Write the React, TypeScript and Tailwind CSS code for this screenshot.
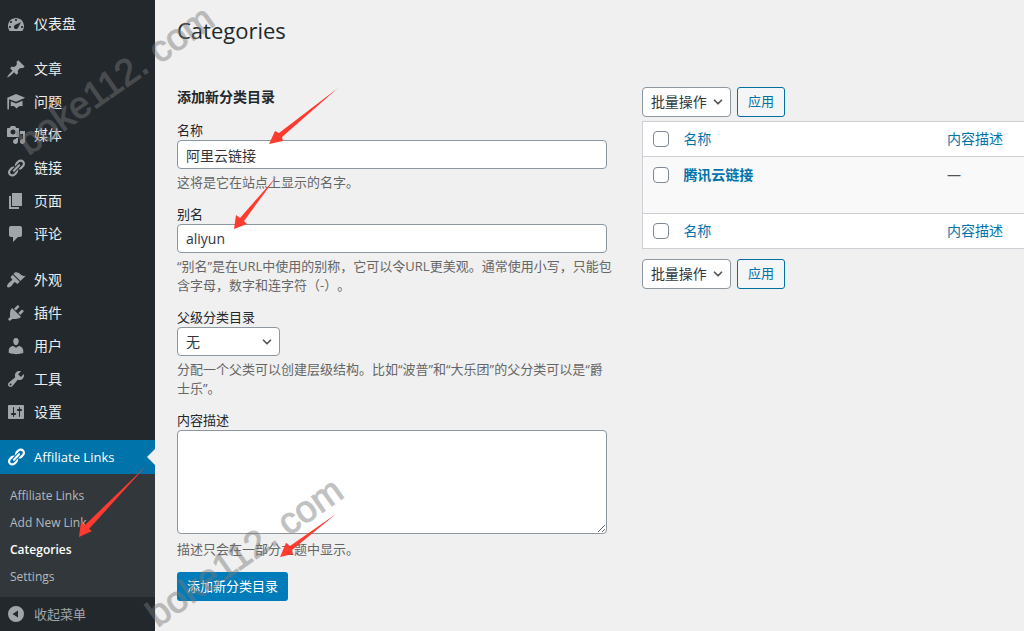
import { useState } from 'react'
import { ChevronDown } from 'lucide-react'
import clsx from 'clsx'

interface MenuItem {
  icon: keyof typeof ICONS
  label: string
}

const ICONS = {
  dashboard:
    'M3.76 17h12.48C17.34 15.63 18 13.9 18 12c0-4.41-3.58-8-8-8s-8 3.59-8 8c0 1.9.66 3.63 1.76 5zM9 6c0-.55.45-1 1-1s1 .45 1 1c0 .56-.45 1-1 1s-1-.44-1-1zM4 8c0-.55.45-1 1-1s1 .45 1 1-.45 1-1 1-1-.45-1-1zm4.52 3.4c.84-.83 6.51-3.5 6.51-3.5s-2.66 5.68-3.49 6.51c-.84.84-2.18.84-3.02 0-.83-.83-.83-2.18 0-3.01zM3 13c0-.55.45-1 1-1s1 .45 1 1c0 .56-.45 1-1 1s-1-.44-1-1zm12 0c0-.55.45-1 1-1s1 .45 1 1c0 .56-.45 1-1 1s-1-.44-1-1z',
  post: 'M10.44 3.02l1.82-1.82 6.36 6.35-1.83 1.82c-1.05-.68-2.48-.57-3.41.36l-.75.75c-.92.93-1.04 2.35-.35 3.41l-1.83 1.82-2.41-2.41-2.8 2.79c-.42.42-3.38 2.71-3.8 2.29s1.86-3.39 2.28-3.81l2.79-2.79L4.1 9.36l1.83-1.82c1.05.69 2.48.57 3.4-.36l.75-.75c.93-.92 1.05-2.35.36-3.41z',
  learn: 'M10 2l9.200 3.800-9.200 4L3.200 7.200 2.900 17.600H1.400L1.300 5.800zM4.800 9.300L10 11.500l6.500-2.700v5.600c-1.800-.7-3.400-.3-4.400.7L10.500 16.600 9.300 15.200c-1-1.200-2.600-1.600-4.500-1z',
  media:
    'M13 11V4c0-.55-.45-1-1-1h-1.67L9 1H5L3.67 3H2c-.55 0-1 .45-1 1v7c0 .55.45 1 1 1h10c.55 0 1-.45 1-1zM7 4.5c1.38 0 2.5 1.12 2.5 2.5S8.38 9.5 7 9.5 4.5 8.38 4.5 7 5.62 4.5 7 4.5zM14 6h5v10.5c0 1.38-1.12 2.5-2.5 2.5S14 17.88 14 16.5s1.12-2.5 2.5-2.5c.17 0 .34.02.5.05V9h-3V6zm-4 8.05V13h2v3.5c0 1.38-1.12 2.5-2.5 2.5S7 17.88 7 16.5 8.12 14 9.5 14c.17 0 .34.02.5.05z',
  link: 'M17.74 2.76c1.68 1.69 1.68 4.41 0 6.1l-1.53 1.52c-1.12 1.12-2.7 1.47-4.14 1.09l2.62-2.61.76-.77.76-.76c.84-.84.84-2.2 0-3.04-.84-.85-2.2-.85-3.04 0l-.77.76-3.38 3.38c-.37-1.44-.02-3.02 1.1-4.14l1.52-1.53c1.69-1.68 4.42-1.68 6.1 0zM8.59 13.43l5.34-5.34c.42-.42.42-1.1 0-1.52-.44-.43-1.13-.39-1.53 0l-5.33 5.34c-.42.42-.42 1.1 0 1.52.44.43 1.13.39 1.52 0zm-.76 2.29l4.14-4.15c.38 1.44.03 3.02-1.09 4.14l-1.52 1.53c-1.69 1.68-4.41 1.68-6.1 0-1.68-1.68-1.68-4.42 0-6.1l1.53-1.52c1.12-1.12 2.7-1.47 4.14-1.1l-4.14 4.15c-.85.84-.85 2.2 0 3.05.84.84 2.2.84 3.04 0z',
  page: 'M6 15V2h10v13H6zm-1 1h8v2H3V5h2v11z',
  comment: 'M5 2h9c1.1 0 2 .9 2 2v7c0 1.1-.9 2-2 2h-2l-5 5v-5H5c-1.1 0-2-.9-2-2V4c0-1.1.9-2 2-2z',
  appearance:
    'M14.48 11.06L7.41 3.99l1.5-1.5c.5-.56 2.3-.47 3.51.32 1.21.8 1.43 1.28 2.91 2.1 1.18.64 2.45 1.26 4.45.85zm-.71.71L6.7 4.7 4.93 6.47c-.39.39-.39 1.02 0 1.41l1.06 1.06c.39.39.39 1.03 0 1.42-.6.6-1.43 1.11-2.21 1.69-.35.26-.7.53-1.01.84C1.43 14.23.4 16.08 1.4 17.07c.99 1 2.84-.03 4.18-1.36.31-.31.58-.66.85-1.02.57-.78 1.08-1.61 1.69-2.21.39-.39 1.02-.39 1.41 0l1.06 1.06c.39.39 1.02.39 1.41 0z',
  plugin:
    'M13.11 4.36L9.87 7.6 8 5.73l3.24-3.24c.35-.34 1.05-.2 1.56.32.52.51.66 1.21.31 1.55zm-8 1.77l.91-1.12 9.01 9.01-1.19.84c-.71.71-2.63 1.16-3.82 1.16H6.14L4.9 17.26c-.59.59-1.54.59-2.12 0-.59-.58-.59-1.53 0-2.12l1.24-1.24v-3.88c0-1.13.4-3.19 1.09-3.89zm7.26 3.97l3.24-3.24c.34-.35 1.04-.21 1.55.31.52.51.66 1.21.31 1.55l-3.24 3.25z',
  user: 'M10 9.25c-2.27 0-2.73-3.44-2.73-3.44C7 4.02 7.82 2 9.97 2c2.16 0 2.98 2.02 2.71 3.81 0 0-.41 3.44-2.68 3.44zm0 2.57L12.72 10c2.39 0 4.52 2.33 4.52 4.53v2.49s-3.65 1.13-7.24 1.13c-3.65 0-7.24-1.13-7.24-1.13v-2.49c0-2.25 1.94-4.48 4.47-4.48z',
  tool: 'M16.68 9.77c-1.34 1.34-3.3 1.67-4.95.99l-5.41 6.52c-.99.99-2.59.99-3.58 0s-.99-2.59 0-3.57l6.52-5.42c-.68-1.65-.35-3.61.99-4.95 1.28-1.28 3.12-1.62 4.72-1.06l-2.89 2.89 2.82 2.82 2.86-2.87c.53 1.58.18 3.39-1.08 4.65zM3.81 16.21c.4.39 1.04.39 1.43 0 .4-.4.4-1.04 0-1.43-.39-.4-1.03-.4-1.43 0-.39.39-.39 1.03 0 1.43z',
  settings:
    'M18 16V4c0-.55-.45-1-1-1H3c-.55 0-1 .45-1 1v12c0 .55.45 1 1 1h14c.55 0 1-.45 1-1zM8 11h1c.55 0 1 .45 1 1s-.45 1-1 1H8v1.5c0 .28-.22.5-.5.5s-.5-.22-.5-.5V13H6c-.55 0-1-.45-1-1s.45-1 1-1h1V5.5c0-.28.22-.5.5-.5s.5.22.5.5V11zm5-2h-1c-.55 0-1-.45-1-1s.45-1 1-1h1V5.5c0-.28.22-.5.5-.5s.5.22.5.5V7h1c.55 0 1 .45 1 1s-.45 1-1 1h-1v5.5c0 .28-.22.5-.5.5s-.5-.22-.5-.5V9z',
  collapse: 'M10 2a8 8 0 1 0 0 16 8 8 0 0 0 0-16zm2 4.5v7L6.500 10z',
}

const MENU_GROUPS: MenuItem[][] = [
  [{ icon: 'dashboard', label: '仪表盘' }],
  [
    { icon: 'post', label: '文章' },
    { icon: 'learn', label: '问题' },
    { icon: 'media', label: '媒体' },
    { icon: 'link', label: '链接' },
    { icon: 'page', label: '页面' },
    { icon: 'comment', label: '评论' },
  ],
  [
    { icon: 'appearance', label: '外观' },
    { icon: 'plugin', label: '插件' },
    { icon: 'user', label: '用户' },
    { icon: 'tool', label: '工具' },
    { icon: 'settings', label: '设置' },
  ],
]

const SUBMENU = ['Affiliate Links', 'Add New Link', 'Categories', 'Settings']

const ARROWS = [
  '269,144 275,131 279,133 338,88 282,137 283,141',
  '234,229 236,215 240,218 277,176 244,221 247,224',
  '79,537 81,522 85,525 146,466 89,529 92,531',
  '280,557 286,543 290,546 336,514 292,550 293,554',
]

const INPUT = 'w-full rounded border border-[#8d979f] bg-white px-2 text-sm text-[#32373c]'

function Icon({ name, className }: { name: keyof typeof ICONS; className?: string }) {
  return (
    <svg viewBox="0 0 20 20" fill="currentColor" fillRule="evenodd" className={clsx('h-5 w-5 shrink-0', className)}>
      <path d={ICONS[name]} />
    </svg>
  )
}

function Sidebar() {
  return (
    <aside className="flex w-[155px] shrink-0 flex-col bg-[#23282d] pt-[7px] text-sm text-[#eee]">
      <nav>
        {MENU_GROUPS.map((group) => (
          <ul key={group[0].label} className={group.length > 5 ? 'mb-[13px]' : 'mb-3'}>
            {group.map((item) => (
              <li key={item.label}>
                <a href="#" className="flex h-[33px] items-center gap-2 pl-1.5 hover:text-[#00b9eb]">
                  <Icon name={item.icon} className="text-[#a0a5aa]" />
                  {item.label}
                </a>
              </li>
            ))}
          </ul>
        ))}

        <a href="#" className="relative flex h-[34px] items-center gap-2 bg-[#0073aa] pl-1.5 text-[13px] text-white">
          <Icon name="link" />
          Affiliate Links
          <span className="absolute right-0 top-1/2 -translate-y-1/2 border-y-8 border-r-8 border-y-transparent border-r-[#f0f0f0]" />
        </a>
        <ul className="bg-[#32373c] pt-2 pb-[7px] text-xs">
          {SUBMENU.map((label) => (
            <li key={label}>
              <a
                href="#"
                className={clsx(
                  'flex h-[27px] items-center pl-2.5',
                  label === 'Categories' ? 'font-semibold text-white' : 'text-[#b4b9be] hover:text-[#00b9eb]'
                )}
              >
                {label}
              </a>
            </li>
          ))}
        </ul>
      </nav>
      <button className="flex h-[34px] items-center gap-2 pl-1.5 text-[13px] text-[#a0a5aa]">
        <Icon name="collapse" />
        收起菜单
      </button>
    </aside>
  )
}

function Help({ children }: { children: string }) {
  return (
    <p className="mt-1 -mr-2 mb-[13px] text-[13px] leading-[19px] text-[#666] [text-spacing-trim:space-all]">
      {children}
    </p>
  )
}

function Label({ htmlFor, children }: { htmlFor: string; children: string }) {
  return (
    <label htmlFor={htmlFor} className="block text-[13px] leading-[19px] text-[#23282d]">
      {children}
    </label>
  )
}

function CategoryForm() {
  const [name, setName] = useState('阿里云链接')
  const [slug, setSlug] = useState('aliyun')

  return (
    <form onSubmit={(e) => e.preventDefault()}>
      <h2 className="mb-3 text-sm leading-6 font-bold text-[#23282d]">添加新分类目录</h2>

      <Label htmlFor="name">名称</Label>
      <input id="name" value={name} onChange={(e) => setName(e.target.value)} className={clsx(INPUT, 'block h-[29px]')} />
      <Help>这将是它在站点上显示的名字。</Help>

      <Label htmlFor="slug">别名</Label>
      <input id="slug" value={slug} onChange={(e) => setSlug(e.target.value)} className={clsx(INPUT, 'block h-[29px]')} />
      <Help>“别名”是在URL中使用的别称，它可以令URL更美观。通常使用小写，只能包含字母，数字和连字符（-）。</Help>

      <Label htmlFor="parent">父级分类目录</Label>
      <div className="relative w-[103px]">
        <select id="parent" className={clsx(INPUT, 'block h-[29px] appearance-none')}>
          <option>无</option>
        </select>
        <ChevronDown className="pointer-events-none absolute top-2 right-1.5 h-3.5 w-3.5 text-[#555]" strokeWidth={3} />
      </div>
      <Help>分配一个父类可以创建层级结构。比如“波普”和“大乐团”的父分类可以是“爵士乐”。</Help>

      <Label htmlFor="description">内容描述</Label>
      <textarea id="description" className={clsx(INPUT, 'mb-1.5 block h-[104px]')} />
      <Help>描述只会在一部分主题中显示。</Help>

      <button className="h-[29px] rounded-[3px] bg-[#007cba] px-2.5 text-[13px] text-white hover:bg-[#0071a1]">
        添加新分类目录
      </button>
    </form>
  )
}

function BulkActions({ id }: { id: string }) {
  return (
    <div className="flex gap-1.5">
      <div className="relative w-[89px]">
        <select
          id={id}
          aria-label="批量操作"
          className="h-[30px] w-full appearance-none rounded border border-[#8d979f] bg-white pl-2 text-sm text-[#32373c]"
        >
          <option>批量操作</option>
        </select>
        <ChevronDown className="pointer-events-none absolute top-2 right-1.5 h-3.5 w-3.5 text-[#555]" strokeWidth={3} />
      </div>
      <button className="h-[30px] rounded-[3px] border border-[#0071a1] bg-[#f3f5f6] px-2.5 text-[13px] text-[#0071a1]">
        应用
      </button>
    </div>
  )
}

function HeadRow() {
  return (
    <tr className="h-[35px] bg-white text-left">
      <td className="pl-2.5">
        <Tick label="全选" />
      </td>
      <th className="font-normal">
        <a href="#" className="text-[#0073aa]">名称</a>
      </th>
      <th className="font-normal">
        <a href="#" className="text-[#0073aa]">内容描述</a>
      </th>
    </tr>
  )
}

function Tick({ label }: { label: string }) {
  return (
    <input
      type="checkbox"
      aria-label={label}
      className="block h-4 w-4 appearance-none rounded border border-[#7e8993] bg-white checked:bg-[#007cba]"
    />
  )
}

function CategoryTable() {
  return (
    <section className="pt-0.5">
      <BulkActions id="bulk-top" />
      <table className="mt-1 mb-2.5 w-full table-fixed border-y border-l border-[#ccd0d4] text-sm">
        <colgroup>
          <col className="w-[41px]" />
          <col />
          <col className="w-[77px]" />
        </colgroup>
        <thead>
          <HeadRow />
        </thead>
        <tbody>
          <tr className="h-[57px] border-y border-[#ccd0d4] bg-[#f9f9f9] align-top">
            <td className="pt-2.5 pl-2.5">
              <Tick label="腾讯云链接" />
            </td>
            <td className="pt-2">
              <a href="#" className="font-bold text-[#0073aa]">腾讯云链接</a>
            </td>
            <td className="pt-2 text-[#555]">—</td>
          </tr>
        </tbody>
        <tfoot>
          <HeadRow />
        </tfoot>
      </table>
      <BulkActions id="bulk-bottom" />
    </section>
  )
}

function Watermark({ className }: { className: string }) {
  return (
    <span
      className={clsx(
        "absolute origin-bottom-left -rotate-35 font-['Liberation_Sans'] text-[37px] leading-none whitespace-nowrap text-[#787878] opacity-45 [-webkit-text-stroke:1px_#787878]",
        className
      )}
    >
      boke112. com
    </span>
  )
}

export default function App() {
  return (
    <div className="relative flex min-h-screen overflow-hidden bg-[#f0f0f0] font-['Open_Sans','Noto_Sans_CJK_SC',sans-serif]">
      <Sidebar />

      <main className="min-w-0 flex-1 pl-[22px]">
        <h1 className="pt-[15px] text-[22px] leading-[30px] text-[#23282d]">Categories</h1>
        <div className="mt-10 grid grid-cols-[9fr_8fr] gap-[35px]">
          <CategoryForm />
          <CategoryTable />
        </div>
      </main>

      {/* Watermarks and pointer arrows above the page */}
      <div className="pointer-events-none absolute inset-0">
        <Watermark className="top-[124px] left-[32px]" />
        <Watermark className="top-[596px] left-[161px]" />
        <svg className="absolute top-0 left-0 h-[631px] w-[1024px]" fill="#ff3b30">
          {ARROWS.map((points) => (
            <polygon key={points} points={points} />
          ))}
        </svg>
      </div>
    </div>
  )
}
